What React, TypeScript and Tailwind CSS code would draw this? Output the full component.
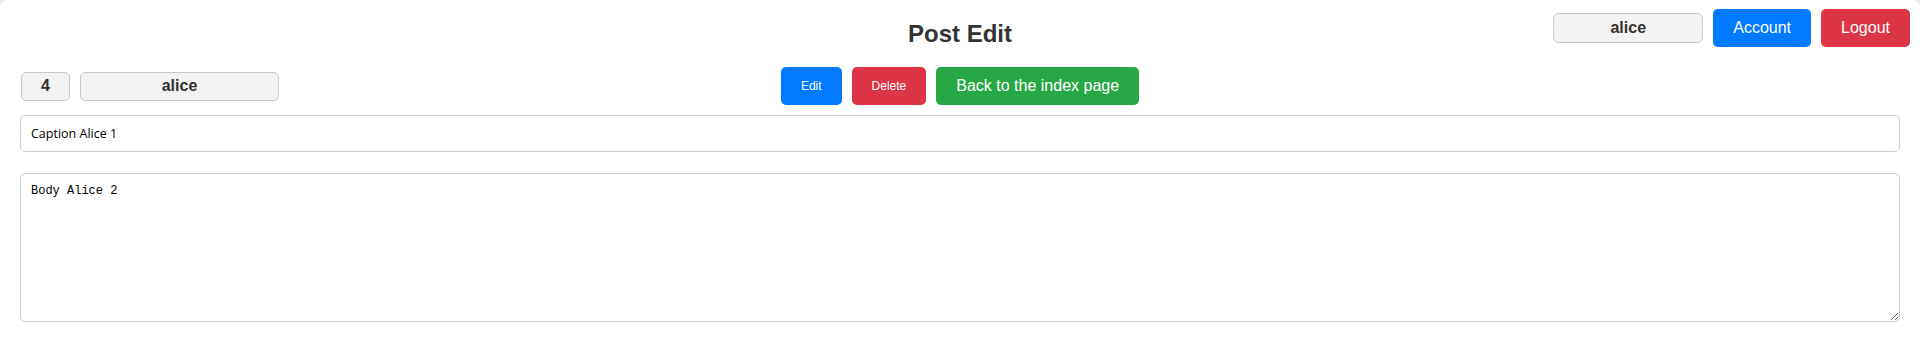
import React from "react";

export default function App() {
  const arial = { fontFamily: '"Liberation Sans", Arial, sans-serif' };
  return (
    <div className="w-full h-[362px] bg-[#ececec]" style={arial}>
      <div className="w-full h-[362px] bg-white rounded-t-[8px] text-[#333]">
        <div className="grid grid-cols-[1fr_auto_1fr] h-[67px]">
          <div />
          <h1 className="mt-[20px] text-[24px] leading-[28px] font-bold text-[#333]">Post Edit</h1>
          <div className="flex justify-end items-center gap-[10px] pr-[10px] self-start pt-[9px]">
            <div className="w-[150px] h-[30px] flex items-center justify-center rounded-[5px] border border-[#c8c8c8] bg-[#f2f2f2] text-[16px] font-bold text-[#333]">
              alice
            </div>
            <button className="h-[38px] px-5 rounded-[5px] bg-[#007bff] text-white text-[16px]">Account</button>
            <button className="h-[38px] px-5 rounded-[5px] bg-[#dc3545] text-white text-[16px]">Logout</button>
          </div>
        </div>
        <div className="grid grid-cols-[1fr_auto_1fr] items-center h-[38px] px-[20px]">
          <div className="flex items-center gap-[10px] pl-px">
            <div className="w-[49px] h-[29px] flex items-center justify-center rounded-[5px] border border-[#c8c8c8] bg-[#f2f2f2] text-[16px] font-bold text-[#333]">
              4
            </div>
            <div className="w-[199px] h-[29px] flex items-center justify-center rounded-[5px] border border-[#c8c8c8] bg-[#f2f2f2] text-[16px] font-bold text-[#333]">
              alice
            </div>
          </div>
          <div className="flex items-center gap-[10px]">
            <button className="h-[38px] px-5 rounded-[5px] bg-[#007bff] text-white text-[12px]">Edit</button>
            <button className="h-[38px] px-5 rounded-[5px] bg-[#dc3545] text-white text-[12px]">Delete</button>
            <button className="h-[38px] px-5 rounded-[5px] bg-[#28a745] text-white text-[16px]">Back to the index page</button>
          </div>
          <div />
        </div>
        <div className="px-[20px] mt-[10px]">
          <input
            readOnly
            value="Caption Alice 1"
            className="block w-full h-[37px] px-[10px] rounded-[5px] border border-[#cccccc] text-[12.5px] text-black outline-none"
            style={{ fontFamily: '"Open Sans", sans-serif' }}
          />
          <textarea
            readOnly
            value="Body Alice 2"
            className="block w-full h-[149px] mt-[21px] px-[10px] py-[10px] rounded-[5px] border border-[#cccccc] text-[12px] leading-[15px] text-black outline-none"
            style={{ fontFamily: '"Liberation Mono", "DejaVu Sans Mono", monospace' }}
          />
        </div>
      </div>
    </div>
  );
}
